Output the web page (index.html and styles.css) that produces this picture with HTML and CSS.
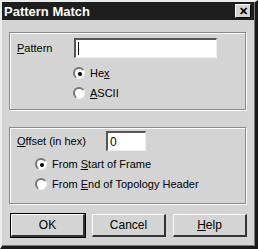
FILE: index.html
```html
<!DOCTYPE html>
<html lang="en">
<head>
    <meta charset="UTF-8">
    <title>Pattern Match</title>
    <link rel="stylesheet" href="styles.css">
</head>
<body>
    <div class="window">
        <div class="titlebar">
            <span class="title">Pattern Match</span>
            <span class="close">&#x2715;</span>
        </div>
        <div class="content">
            <div class="group group-pattern">
                <div class="row">
                    <span class="label"><u>P</u>attern</span>
                    <span class="input input-wide"><span class="caret"></span></span>
                </div>
                <div class="radio-list radio-list-pattern">
                    <div class="radio-row"><span class="radio checked"></span><span>He<u>x</u></span></div>
                    <div class="radio-row"><span class="radio"></span><span><u>A</u>SCII</span></div>
                </div>
            </div>

            <div class="group group-offset">
                <div class="row">
                    <span class="label label-offset"><u>O</u>ffset (in hex)</span>
                    <span class="input input-small">0</span>
                </div>
                <div class="radio-list radio-list-offset">
                    <div class="radio-row"><span class="radio checked"></span><span>From <u>S</u>tart of Frame</span></div>
                    <div class="radio-row"><span class="radio"></span><span>From <u>E</u>nd of Topology Header</span></div>
                </div>
            </div>

            <div class="buttons">
                <button class="btn btn-default">OK</button>
                <button class="btn">Cancel</button>
                <button class="btn"><u>H</u>elp</button>
            </div>
        </div>
    </div>
</body>
</html>
```

FILE: styles.css
```css
body {
    margin: 0;
    background: #d4d4d4;
    font-family: "Liberation Sans", Arial, sans-serif;
    font-size: 11px;
    color: #000;
}
.window {
    width: 258px;
    height: 249px;
    box-sizing: border-box;
    background: #d4d4d4;
    border-top: 2px solid #ececec;
    border-left: 2px solid #ececec;
    border-right: 3px solid #1a1a1a;
    border-bottom: 3px solid #1a1a1a;
    box-shadow: inset -1px -1px 0 #7a7a7a;
}
.titlebar {
    height: 18px;
    margin-right: 1px;
    background: #1e1e1e;
    display: flex;
    align-items: center;
    justify-content: space-between;
    padding: 0 3px 0 2px;
}
.title {
    color: #fff;
    font-weight: bold;
    font-size: 13px;
}
.close {
    width: 16px;
    height: 14px;
    box-sizing: border-box;
    background: #d4d4d4;
    border-top: 1px solid #fff;
    border-left: 1px solid #fff;
    border-right: 1px solid #000;
    border-bottom: 1px solid #000;
    font-size: 11px;
    font-weight: bold;
    line-height: 12px;
    text-align: center;
    color: #000;
}
.content {
    padding: 12px 0 0 7px;
}
.group {
    width: 237px;
    box-sizing: border-box;
    border: 1px solid #8a8a8a;
    box-shadow: 1px 1px 0 #fff, inset 1px 1px 0 #fff;
}
.group-pattern {
    height: 78px;
    padding-top: 5px;
}
.group-offset {
    height: 77px;
    margin-top: 17px;
    padding-top: 3px;
}
.row {
    display: flex;
    align-items: center;
    height: 20px;
}
.label {
    width: 57px;
    padding-left: 7px;
}
.label-offset {
    width: 89px;
}
.input {
    height: 20px;
    box-sizing: border-box;
    background: #fff;
    border-top: 2px solid #555;
    border-left: 2px solid #555;
    border-right: 1px solid #eee;
    border-bottom: 1px solid #eee;
    display: flex;
    align-items: center;
    padding-left: 2px;
    font-size: 12px;
}
.input-wide {
    width: 143px;
}
.input-small {
    width: 40px;
}
.caret {
    width: 1px;
    height: 13px;
    background: #000;
}
.radio-list {
    display: flex;
    flex-direction: column;
}
.radio-list-pattern {
    padding: 5px 0 0 63px;
}
.radio-list-offset {
    padding: 3px 0 0 25px;
}
.radio-row {
    display: flex;
    align-items: center;
    height: 20px;
    gap: 5px;
}
.radio {
    width: 12px;
    height: 12px;
    box-sizing: border-box;
    border-radius: 50%;
    background: #fff;
    border-top: 2px solid #777;
    border-left: 2px solid #777;
    border-right: 1px solid #f4f4f4;
    border-bottom: 1px solid #f4f4f4;
    display: flex;
    align-items: center;
    justify-content: center;
}
.radio.checked::after {
    content: "";
    width: 4px;
    height: 4px;
    border-radius: 50%;
    background: #000;
}
.buttons {
    display: flex;
    gap: 7px;
    margin-top: 10px;
    padding-left: 2px;
}
.btn {
    width: 74px;
    height: 23px;
    box-sizing: border-box;
    background: #d4d4d4;
    font-family: "Liberation Sans", Arial, sans-serif;
    font-size: 12px;
    color: #000;
    border-top: 1px solid #fff;
    border-left: 1px solid #fff;
    border-right: 2px solid #333;
    border-bottom: 2px solid #333;
    padding: 0;
}
.btn-default {
    outline: 1px solid #000;
    outline-offset: 0;
}
```
